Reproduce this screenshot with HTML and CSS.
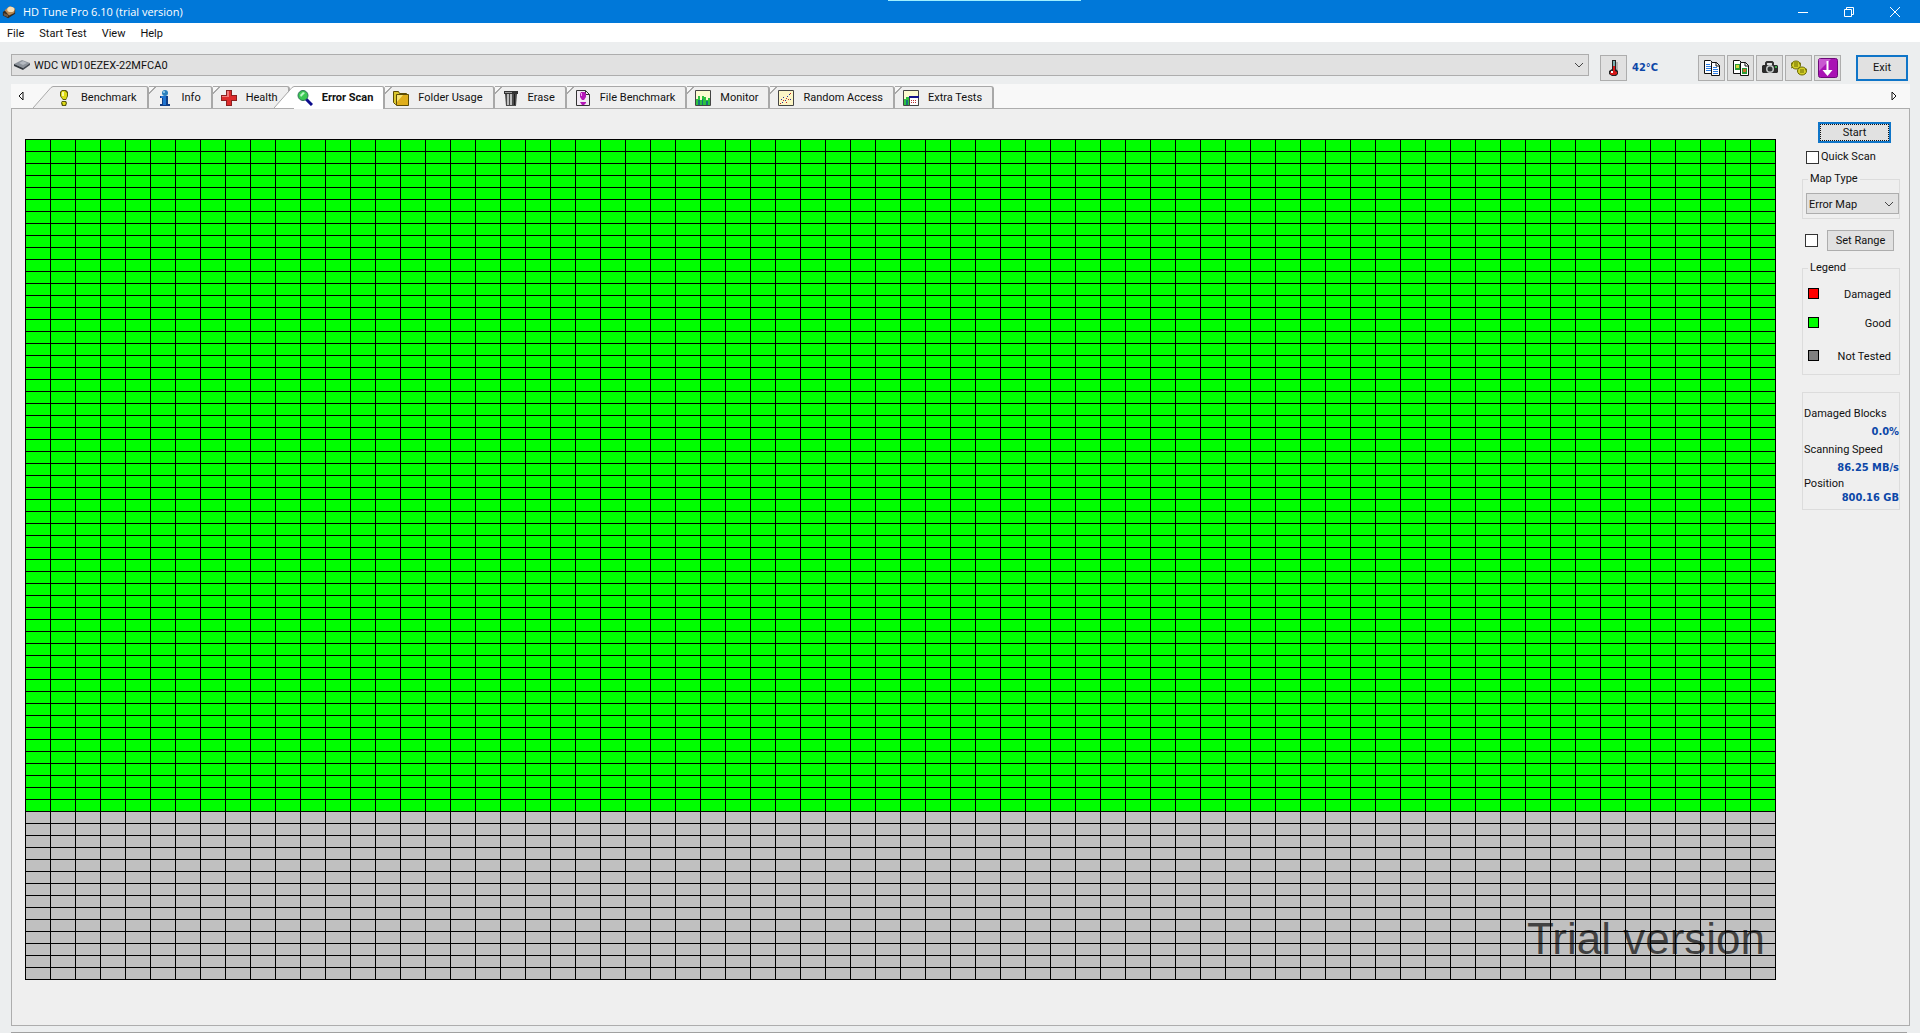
FILE: index.html
```html
<!DOCTYPE html>
<html lang="en">
<head>
  <meta charset="UTF-8" />
  <meta name="viewport" content="width=device-width, initial-scale=1" />
  <title>HD Tune Pro 6.10 (trial version)</title>
  <link rel="stylesheet" href="styles.css">
</head>
<body>
  <header class="titlebar">
    <svg class="app-icon" viewBox="0 0 16 16"><path d="M1 8 9 2l6 3v5l-8 5-6-3z" fill="#33291f"/><path d="M3 6 9 1l6 3-1 5-6 3z" fill="#b98b55"/><ellipse cx="10" cy="5" rx="4" ry="3" fill="#f6dfb8"/><path d="M2 9l5 2v3l-5-2z" fill="#6d5a48"/></svg>
    <h1>HD Tune Pro 6.10 (trial version)</h1>
    <div class="window-buttons">
      <button aria-label="Minimize"><svg viewBox="0 0 10 10"><path d="M0 5.5h10"/></svg></button>
      <button aria-label="Restore"><svg viewBox="0 0 10 10"><path d="M.5 2.5h7v7h-7zM2.500 2.500v-2h7v7h-2"/></svg></button>
      <button aria-label="Close"><svg viewBox="0 0 10 10"><path d="M0 0l10 10M10 0 0 10"/></svg></button>
    </div>
    <span class="top-handle"></span>
  </header>

  <nav class="menubar">
    <a href="#">File</a>
    <a href="#">Start Test</a>
    <a href="#">View</a>
    <a href="#">Help</a>
  </nav>

  <div class="toolbar">
    <div class="combo drive">
      <svg class="icon" viewBox="0 0 16 16"><path d="M0 7l8-4 8 3-7 5z" fill="#8d939b"/><path d="M0 7l9 4v2L0 9z" fill="#2f353b"/><path d="M9 11l7-5v2l-7 5z" fill="#454b54"/><path d="M5 6l4-2 4 2-4 2z" fill="#b5bac1"/></svg>
      <select aria-label="Drive">
        <option>WDC WD10EZEX-22MFCA0</option>
      </select>
      <svg class="chevron" viewBox="0 0 10 10"><path d="M1 3l4 4 4-4"/></svg>
    </div>

    <button class="tool" aria-label="Temperature">
      <svg class="icon" viewBox="0 0 16 16"><path d="M6 0h4v9l2 2v3l-2 2H6l-3-2v-3l3-2z" fill="#222"/><path d="M7 1h2v5H7z" fill="#7bb0b0"/><path d="M7 6h2v5l2 1v2l-2 1H6l-2-1v-2l3-1z" fill="#d81818"/><path d="M5 11h2v2H5z" fill="#fff"/><path d="M10 3h2M10 5h2M10 7h2M10 9h2" stroke="#888"/></svg>
    </button>
    <span class="temperature">42°C</span>

    <div class="tools">
      <button class="tool" aria-label="Copy text">
        <svg class="icon" viewBox="0 0 16 16"><path d="M.5.500h6l2 2v11h-8z" fill="#fff" stroke="#111"/><path d="M2 4.500h4M2 6.500h5M2 8.500h5M2 10.500h5" stroke="#2c7be0"/><path d="M7.500 2.500h5l3 3v10h-8z" fill="#fff" stroke="#111"/><path d="M12 2v4h4" fill="none" stroke="#111"/><path d="M9 7.500h4M9 9.500h5M9 11.500h5M9 13.500h5" stroke="#2c7be0"/></svg>
      </button>
      <button class="tool" aria-label="Copy screenshot">
        <svg class="icon" viewBox="0 0 16 16"><path d="M.5.500h6l2 2v11h-8z" fill="#fff" stroke="#111"/><path d="M2 4h5v6H2z" fill="#2a9a35"/><path d="M3 5h3v3H3z" fill="#d9d93c"/><path d="M7.500 2.500h5l3 3v10h-8z" fill="#fff" stroke="#111"/><path d="M12 2v4h4" fill="none" stroke="#111"/><path d="M9 8h5v6H9z" fill="#2a9a35"/><path d="M10 9h3v3h-3z" fill="#c9742b"/></svg>
      </button>
      <button class="tool" aria-label="Save screenshot">
        <svg class="icon" viewBox="0 0 16 16"><path d="M4 5V3l1-1h5l1 1v2" fill="none" stroke="#333" stroke-width="2"/><path d="M1 5h14l1 1v6l-1 1H1l-1-1V6z" fill="#2b2b2b"/><circle cx="8" cy="9" r="4" fill="#c4c8c8"/><circle cx="8" cy="9" r="2.500" fill="#333838"/><path d="M13 6h2v2h-2z" fill="#3fae4b"/></svg>
      </button>
      <button class="tool" aria-label="Options">
        <svg class="icon" viewBox="0 0 16 16"><g stroke="#6b6a00"><ellipse cx="5" cy="5" rx="4.500" ry="4" fill="#d6d029"/><ellipse cx="11" cy="11" rx="4.500" ry="4" fill="#d6d029"/><path d="M0 3l2 1M0 8l2-1M10 3 8 4M4 2v5M6 2v5M7 14l1-1M15 14l-1-1M16 9l-2 1M10 9v4M12 9v4" fill="none"/></g></svg>
      </button>
      <button class="tool" aria-label="Save">
        <svg class="icon save" viewBox="0 0 20 20"><rect x=".5" y=".5" width="19" height="19" rx="2" fill="#a912b4" stroke="#6c0a78"/><path d="M1 1h12L1 13z" fill="#c958d1"/><path d="M8.500 3h2v9h4L9.500 18 4.500 12h4z" fill="#fff"/></svg>
      </button>
    </div>
    <button class="exit">Exit</button>
  </div>

  <main class="pages">
    <div class="tab-strip">
      <button class="scroll" aria-label="Previous tab"><svg viewBox="0 0 6 10"><path d="M5 1v8L1 5z"/></svg></button>
      <div class="tabs">
        <button class="tab slanted">
          <svg class="slant" viewBox="0 0 20 22"><path d="M0 22 20 0v22z" fill="#efefef"/><path d="M0 22 18 1.500 20 .5" fill="none" stroke="#a8a8a8"/></svg>
          <svg class="icon" viewBox="0 0 16 16"><path d="M6 0h4l2 2v4l-2 4H7L4 6V2z" fill="#5b5a10"/><path d="M6 1h3l2 2v3l-1 3H7L5 6V3z" fill="#dfdb16"/><path d="M6 2h2v4H6z" fill="#fbfaa0"/><path d="M6 11h4l1 2-1 3H6l-1-3z" fill="#5b5a10"/><path d="M6 12h3l1 1-1 2H7z" fill="#dfdb16"/></svg>
          Benchmark
        </button>
        <button class="tab">
          <svg class="icon" viewBox="0 0 16 16"><circle cx="8" cy="3" r="3" fill="#2b80bd"/><circle cx="7" cy="2" r="1" fill="#a6d8f2"/><path d="M3 6h8v8h2v2H3v-2h2V8H3z" fill="#113f87"/><path d="M4 6h5v9H6V8H4z" fill="#1f74d0"/></svg>
          Info
        </button>
        <button class="tab">
          <svg class="icon" viewBox="0 0 16 16"><path d="M5 0h6v5h5v6h-5v5H5v-5H0V5h5z" fill="#8a2020"/><path d="M6 1h4v5h5v4h-5v5H6v-5H1V6h5z" fill="#dd2b2b"/><path d="M6 1h2v6H1V6h5z" fill="#f07a7a"/></svg>
          Health
        </button>
        <button class="tab slanted active">
          <svg class="slant" viewBox="0 0 20 22"><path d="M0 22 20 0v22z" fill="#fff"/><path d="M0 22 18 1.500 20 .5" fill="none" stroke="#a8a8a8"/></svg>
          <svg class="icon" viewBox="0 0 16 16"><path d="M9 9l6 6" stroke="#0b0b8c" stroke-width="3"/><circle cx="6" cy="5.500" r="5" fill="#3cc854" stroke="#32745a"/><path d="M3 5l3-3 2 1-4 4z" fill="#b9f7c4"/></svg>
          Error Scan
        </button>
        <button class="tab">
          <svg class="icon" viewBox="0 0 16 16"><path d="M.5 1.500h5l1 2h7v11h-11l-2-2z" fill="#d9c52c" stroke="#5c4c05"/><path d="M3.500 4.500h12v11h-12z" fill="#dfae1b" stroke="#5c4c05"/><path d="M4 5h6L4 12z" fill="#f6e273"/></svg>
          Folder Usage
        </button>
        <button class="tab">
          <svg class="icon" viewBox="0 0 16 16"><path d="M1 1h14v3H1z" fill="#333"/><path d="M2 4h12l-1 12H3z" fill="#4b4b4b"/><path d="M5 4v11M8 4v11" stroke="#bdbdbd" stroke-width="2"/><path d="M11.500 4v11" stroke="#1c1c1c"/><path d="M2 2h7v1H2z" fill="#999"/></svg>
          Erase
        </button>
        <button class="tab">
          <svg class="icon" viewBox="0 0 16 16"><path d="M1.500.5h9l4 4v11h-13z" fill="#f1e9f2" stroke="#333"/><path d="M10.500.5v4h4" fill="none" stroke="#333"/><path d="M6 2h4l1 2v3L9 10H7L5 7V4z" fill="#b416b8"/><path d="M5 12h6v1l-2 2H7z" fill="#b416b8"/><path d="M6 3h1v3H6z" fill="#efa6f0"/></svg>
          File Benchmark
        </button>
        <button class="tab">
          <svg class="icon" viewBox="0 0 16 16"><path d="M.5.5h15v15H.5z" fill="#fcfbd0" stroke="#444"/><path d="M1 9h2V6h2v4h2V6h2v1h2v3h2V8h2v7H1z" fill="#2ec23f"/><path d="M3 10h2v5H3zM7 9h1v6H7zM11 11h2v4h-2z" fill="#16727c"/></svg>
          Monitor
        </button>
        <button class="tab">
          <svg class="icon" viewBox="0 0 16 16"><path d="M.5.5h15v15H.5z" fill="#fdf6c5" stroke="#444"/><path d="M3 9h1v1H3zM5 7h1v1H5zM7 10h1v1H7zM9 6h1v1H9zM11 4h1v1h-1zM12 9h1v1h-1zM4 12h1v1H4z" fill="#2b2fa0"/><path d="M2 13h1v1H2zM5 10h1v1H5zM8 8h1v1H8zM10 9h1v1h-1zM12 3h1v1h-1zM8 12h1v1H8z" fill="#c62828"/></svg>
          Random Access
        </button>
        <button class="tab">
          <svg class="icon" viewBox="0 0 16 16"><path d="M.5.5h15v15H.5z" fill="#fcfbd0" stroke="#444"/><path d="M1 9h2V7h3v8H1z" fill="#2ec23f"/><path d="M3 10h2v5H3z" fill="#16727c"/><path d="M6.500 6.500h9v9h-9z" fill="#fff" stroke="#444"/><path d="M6 6h10v2H6z" fill="#14148c"/><path d="M8 10h1v1H8zM10 10h1v1h-1zM12 10h1v1h-1zM8 12h1v1H8zM10 12h1v1h-1zM12 12h1v1h-1z" fill="#b33"/></svg>
          Extra Tests
        </button>
      </div>
      <button class="scroll next" aria-label="Next tab"><svg viewBox="0 0 6 10"><path d="M1 1v8l4-4z"/></svg></button>
    </div>

    <section class="panel">
      <div class="map">
        <div class="good"></div>
        <div class="untested"></div>
        <span class="watermark">Trial version</span>
      </div>

      <aside class="sidebar">
        <button class="start">Start</button>
        <label class="check"><input type="checkbox"> Quick Scan</label>

        <fieldset class="map-type">
          <legend>Map Type</legend>
          <div class="combo">
            <select aria-label="Map Type">
              <option>Error Map</option>
            </select>
            <svg class="chevron" viewBox="0 0 10 10"><path d="M1 3l4 4 4-4"/></svg>
          </div>
        </fieldset>

        <div class="range">
          <input type="checkbox" aria-label="Use range">
          <button>Set Range</button>
        </div>

        <fieldset class="legend">
          <legend>Legend</legend>
          <ul>
            <li><span class="swatch red"></span>Damaged</li>
            <li><span class="swatch green"></span>Good</li>
            <li><span class="swatch gray"></span>Not Tested</li>
          </ul>
        </fieldset>

        <dl class="stats">
          <dt>Damaged Blocks</dt>
          <dd>0.0%</dd>
          <dt>Scanning Speed</dt>
          <dd>86.25 MB/s</dd>
          <dt>Position</dt>
          <dd>800.16 GB</dd>
        </dl>
      </aside>
    </section>
  </main>
  <footer class="window-edge"></footer>
</body>
</html>
```
FILE: styles.css
```css
* {
  box-sizing: border-box;
}
body {
  margin: 0;
  min-height: 100vh;
  display: flex;
  flex-direction: column;
  background: #eceeef;
  color: #111;
  font-family: Roboto, "Liberation Sans", sans-serif;
  font-size: 11px;
  line-height: 14px;
}
button, select, input {
  font: inherit;
  color: inherit;
  margin: 0;
}
button {
  display: flex;
  align-items: center;
  justify-content: center;
  padding: 0;
  background: #e1e1e1;
  border: 1px solid #adadad;
}
.icon {
  flex: none;
  width: 16px;
  height: 16px;
}

/* Title bar and menu */
.titlebar {
  position: relative;
  display: flex;
  align-items: center;
  height: 23px;
  padding: 0 2px;
  background: #0078d9;
  color: #fff;
}
.app-icon {
  width: 14px;
  height: 14px;
}
h1 {
  flex: 1;
  margin: 0 0 0 7px;
  font-family: "Open Sans", "Noto Sans", sans-serif;
  font-size: 11px;
  font-weight: normal;
}
.window-buttons {
  display: flex;
}
.window-buttons button {
  width: 46px;
  height: 20px;
  background: none;
  border: none;
}
.window-buttons svg {
  width: 10px;
  height: 10px;
  fill: none;
  stroke: #fff;
}
.top-handle {
  position: absolute;
  top: 0;
  left: 888px;
  width: 193px;
  height: 1px;
  background: #9ff0ff;
}
.menubar {
  display: flex;
  gap: 15px;
  height: 19px;
  padding: 4px 7px 0;
  background: #fff;
}
.menubar a {
  color: #111;
  text-decoration: none;
}

/* Drive selector and tool buttons */
.toolbar {
  display: flex;
  align-items: flex-start;
  height: 42px;
  padding: 13px 12px 0 11px;
}
.combo {
  display: flex;
  align-items: center;
  height: 22px;
  padding: 0 4px 0 2px;
  background: #e1e1e1;
  border: 1px solid #adadad;
}
.combo select {
  flex: 1;
  min-width: 0;
  height: 20px;
  padding: 2px 0 0;
  appearance: none;
  background: none;
  border: none;
}
.chevron {
  width: 10px;
  height: 10px;
  fill: none;
  stroke: #444;
  pointer-events: none;
}
.drive {
  flex: 1;
  gap: 4px;
  margin: -1px 11px 0 0;
}
.tool {
  width: 27px;
  height: 26px;
}
.tool .save {
  width: 20px;
  height: 20px;
}
.temperature {
  width: 66px;
  margin-left: 5px;
  color: #0c47a8;
  font-family: "DejaVu Sans Condensed", "DejaVu Sans", sans-serif;
  font-weight: bold;
  line-height: 26px;
}
.tools {
  display: flex;
  gap: 2px;
}
.exit {
  width: 52px;
  height: 26px;
  margin-left: 15px;
  border: 2px solid #0f75c8;
}

/* Tabs */
.pages {
  flex: 1;
  display: flex;
  flex-direction: column;
  margin: 0 10px 6px 11px;
}
.tab-strip {
  display: flex;
  height: 24px;
  background: #f8f8f8;
}
.scroll {
  width: 20px;
  background: none;
  border: none;
}
.next {
  margin-right: 6px;
}
.scroll svg {
  width: 6px;
  height: 10px;
  fill: #fff;
  stroke: #111;
}
.tabs {
  flex: 1;
  display: flex;
  align-items: flex-end;
}
.tab {
  position: relative;
  gap: 9px;
  height: 22px;
  padding: 0 10px 0 8px;
  background: linear-gradient(135deg, #f8f8f8 4px, #a8a8a8 4px, #a8a8a8 5px, #efefef 5px);
  border: solid #a8a8a8;
  border-width: 1px 2px 0 0;
  border-radius: 0 3px 0 0;
}
.slanted {
  margin-left: 22px;
  padding-left: 3px;
  background: #efefef;
}
.active {
  z-index: 1;
  height: 23px;
  margin: 0 0 -1px 4px;
  padding-bottom: 1px;
  background: #fff;
  font-weight: bold;
}
.slant {
  position: absolute;
  right: 100%;
  top: -1px;
  width: 20px;
  height: 22px;
}

/* Scan page */
.panel {
  flex: 1;
  display: flex;
  align-items: flex-start;
  gap: 26px;
  padding: 0 9px 0 13px;
  background: #efefef;
  border: 1px solid #adadad;
}
.map {
  position: relative;
  flex: 1;
  margin: 30px 0;
  border: solid #000;
  border-width: 1px 0 0 1px;
}
.good, .untested {
  background-image:
    linear-gradient(to left, #000 1px, transparent 1px),
    linear-gradient(to top, #000 1px, transparent 1px);
  background-size: 25px 12px;
}
.good {
  height: 672px;
  background-color: #00ff00;
}
.untested {
  height: 168px;
  background-color: #c0c0c0;
}
.watermark {
  position: absolute;
  right: 11px;
  bottom: 17px;
  color: rgba(0, 0, 0, 0.66);
  font: 44px/48px "Liberation Sans", Arial, sans-serif;
}

.sidebar {
  width: 98px;
  padding-top: 13px;
}
.sidebar input {
  flex: none;
  width: 13px;
  height: 13px;
  appearance: none;
  background: #fff;
  border: 1px solid #333;
}
.start {
  width: 73px;
  height: 21px;
  margin-left: 16px;
  border: 2px solid #0f75c8;
  outline: 1px dotted #111;
  outline-offset: -3px;
}
.check {
  display: flex;
  align-items: center;
  gap: 2px;
  margin: 7px 0 0 4px;
}
fieldset {
  min-width: 0;
  margin: 0;
  border: 1px solid #dcdcdc;
}
legend {
  padding: 0 2px;
}
.map-type {
  margin-top: 8px;
  padding: 7px 0 4px 3px;
}
.map-type .combo {
  height: 21px;
}
.map-type legend {
  margin-left: 2px;
}
.range {
  display: flex;
  align-items: center;
  gap: 9px;
  margin: 11px 0 10px 3px;
}
.range button {
  width: 67px;
  height: 21px;
}
.legend {
  padding: 13px 8px 10px 5px;
}
.legend ul {
  display: flex;
  flex-direction: column;
  gap: 15px;
  margin: 0;
  padding: 0;
  list-style: none;
}
.legend li {
  display: flex;
  align-items: flex-start;
  justify-content: space-between;
}
.legend li:last-child {
  margin-top: 4px;
}
.swatch {
  width: 11px;
  height: 11px;
  border: 1px solid #000;
}
.red {
  background: #ff0000;
}
.green {
  background: #00ff00;
}
.gray {
  background: #808080;
}
.stats {
  margin: 17px 0 0;
  padding: 12px 0 4px 1px;
  border: 1px solid #dcdcdc;
}
.stats dt, .stats dd {
  margin: 0;
  line-height: 18px;
}
.stats dd {
  color: #0c47a8;
  font-family: "DejaVu Sans Condensed", "DejaVu Sans", sans-serif;
  font-weight: bold;
  text-align: right;
}
.stats dt:last-of-type, .stats dd:last-of-type {
  line-height: 14px;
}
.window-edge {
  height: 1px;
  margin: 0 13px 0 11px;
  background: #a0a0a0;
}
```
